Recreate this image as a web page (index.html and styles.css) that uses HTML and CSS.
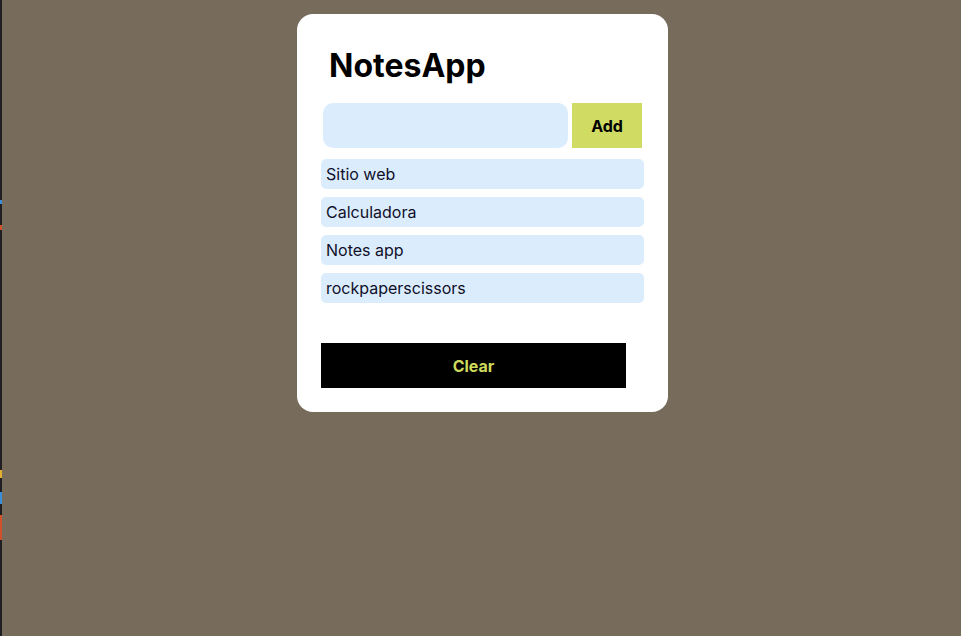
FILE: index.html
```html
<!DOCTYPE html>
<html lang="es">
<head>
<meta charset="utf-8">
<title>NotesApp</title>
<link rel="stylesheet" href="styles.css">
</head>
<body>
<div class="editor-strip"></div>
<main class="stage">
  <section class="card">
    <h1 class="title">NotesApp</h1>
    <div class="entry">
      <input class="entry-input" type="text">
      <button class="add-btn">Add</button>
    </div>
    <ul class="notes">
      <li class="note">Sitio web</li>
      <li class="note">Calculadora</li>
      <li class="note">Notes app</li>
      <li class="note">rockpaperscissors</li>
    </ul>
    <button class="clear-btn">Clear</button>
  </section>
</main>
</body>
</html>
```
FILE: styles.css
```css
html, body {
  margin: 0;
  height: 100%;
}
body {
  display: flex;
  background: #776b5b;
  font-family: Inter, "Noto Sans", sans-serif;
  overflow: hidden;
}
.editor-strip {
  width: 2px;
  flex: none;
  background:
    linear-gradient(to bottom,
      #1f1f22 0, #1f1f22 200px,
      #3a8fd8 200px, #3a8fd8 204px, #1f1f22 204px, #1f1f22 225px,
      #d0502a 225px, #d0502a 230px, #1f1f22 230px, #1f1f22 470px,
      #e2b02c 470px, #e2b02c 478px, #1f1f22 478px, #1f1f22 492px,
      #3a8fd8 492px, #3a8fd8 504px, #1f1f22 504px, #1f1f22 515px,
      #d0502a 515px, #d0502a 540px, #1f1f22 540px);
}
.stage {
  flex: 1;
  display: flex;
  justify-content: center;
  align-items: flex-start;
  padding: 14px 0 0 2px;
}
.card {
  width: 371px;
  box-sizing: border-box;
  background: #fff;
  border-radius: 16px;
  padding: 32px 24px 24px 24px;
}
.title {
  margin: 0 0 17px 8px;
  font-size: 32px;
  line-height: 40px;
  font-weight: 700;
  color: #000;
}
.entry {
  display: flex;
  gap: 4px;
  margin-left: 2px;
  height: 45px;
}
.entry-input {
  width: 245px;
  box-sizing: border-box;
  border: none;
  border-radius: 10px;
  background: #dbedfc;
  outline: none;
  font-family: inherit;
  font-size: 16px;
}
.add-btn {
  width: 70px;
  border: none;
  background: #cfdb62;
  font-family: inherit;
  font-size: 16px;
  font-weight: 700;
  color: #000;
  padding: 0;
}
.notes {
  list-style: none;
  margin: 11px 0 0 0;
  padding: 0;
  display: flex;
  flex-direction: column;
  gap: 8px;
  width: 323px;
}
.note {
  height: 30px;
  line-height: 30px;
  padding-left: 5px;
  background: #dbedfc;
  border-radius: 5px;
  font-size: 16px;
  color: #10102a;
}
.clear-btn {
  display: block;
  margin-top: 40px;
  width: 305px;
  height: 45px;
  border: none;
  background: #000;
  color: #cfdb5b;
  font-family: inherit;
  font-size: 16px;
  font-weight: 700;
  padding: 0;
}
```
